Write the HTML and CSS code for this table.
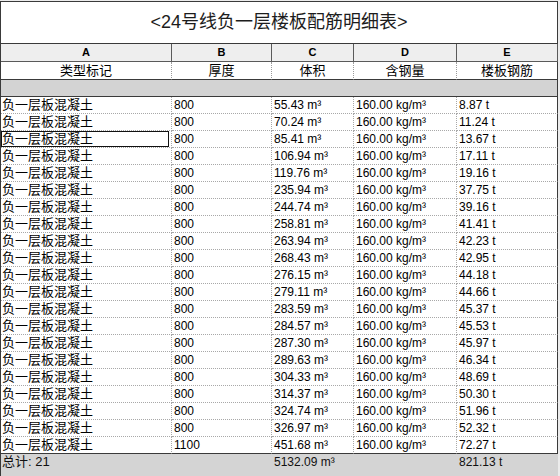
FILE: index.html
```html
<!DOCTYPE html>
<html lang="zh-CN">
<head>
<meta charset="utf-8">
<title>24号线负一层楼板配筋明细表</title>
<link rel="stylesheet" href="styles.css">
</head>
<body>
<div class="sheet">
  <div class="row title-row"><div class="title">&lt;24号线负一层楼板配筋明细表&gt;</div></div>
  <div class="row letters"><div class="c">A</div><div class="c">B</div><div class="c">C</div><div class="c">D</div><div class="c">E</div></div>
  <div class="row names"><div class="c">类型标记</div><div class="c">厚度</div><div class="c">体积</div><div class="c">含钢量</div><div class="c">楼板钢筋</div></div>
  <div class="row band"><div class="c"></div></div>
  <div class="data">
    <div class="row item"><div class="c cj">负一层板混凝土</div><div class="c">800</div><div class="c">55.43 m³</div><div class="c">160.00 kg/m³</div><div class="c">8.87 t</div></div>
    <div class="row item"><div class="c cj">负一层板混凝土</div><div class="c">800</div><div class="c">70.24 m³</div><div class="c">160.00 kg/m³</div><div class="c">11.24 t</div></div>
    <div class="row item"><div class="c cj selected">负一层板混凝土</div><div class="c">800</div><div class="c">85.41 m³</div><div class="c">160.00 kg/m³</div><div class="c">13.67 t</div></div>
    <div class="row item"><div class="c cj">负一层板混凝土</div><div class="c">800</div><div class="c">106.94 m³</div><div class="c">160.00 kg/m³</div><div class="c">17.11 t</div></div>
    <div class="row item"><div class="c cj">负一层板混凝土</div><div class="c">800</div><div class="c">119.76 m³</div><div class="c">160.00 kg/m³</div><div class="c">19.16 t</div></div>
    <div class="row item"><div class="c cj">负一层板混凝土</div><div class="c">800</div><div class="c">235.94 m³</div><div class="c">160.00 kg/m³</div><div class="c">37.75 t</div></div>
    <div class="row item"><div class="c cj">负一层板混凝土</div><div class="c">800</div><div class="c">244.74 m³</div><div class="c">160.00 kg/m³</div><div class="c">39.16 t</div></div>
    <div class="row item"><div class="c cj">负一层板混凝土</div><div class="c">800</div><div class="c">258.81 m³</div><div class="c">160.00 kg/m³</div><div class="c">41.41 t</div></div>
    <div class="row item"><div class="c cj">负一层板混凝土</div><div class="c">800</div><div class="c">263.94 m³</div><div class="c">160.00 kg/m³</div><div class="c">42.23 t</div></div>
    <div class="row item"><div class="c cj">负一层板混凝土</div><div class="c">800</div><div class="c">268.43 m³</div><div class="c">160.00 kg/m³</div><div class="c">42.95 t</div></div>
    <div class="row item"><div class="c cj">负一层板混凝土</div><div class="c">800</div><div class="c">276.15 m³</div><div class="c">160.00 kg/m³</div><div class="c">44.18 t</div></div>
    <div class="row item"><div class="c cj">负一层板混凝土</div><div class="c">800</div><div class="c">279.11 m³</div><div class="c">160.00 kg/m³</div><div class="c">44.66 t</div></div>
    <div class="row item"><div class="c cj">负一层板混凝土</div><div class="c">800</div><div class="c">283.59 m³</div><div class="c">160.00 kg/m³</div><div class="c">45.37 t</div></div>
    <div class="row item"><div class="c cj">负一层板混凝土</div><div class="c">800</div><div class="c">284.57 m³</div><div class="c">160.00 kg/m³</div><div class="c">45.53 t</div></div>
    <div class="row item"><div class="c cj">负一层板混凝土</div><div class="c">800</div><div class="c">287.30 m³</div><div class="c">160.00 kg/m³</div><div class="c">45.97 t</div></div>
    <div class="row item"><div class="c cj">负一层板混凝土</div><div class="c">800</div><div class="c">289.63 m³</div><div class="c">160.00 kg/m³</div><div class="c">46.34 t</div></div>
    <div class="row item"><div class="c cj">负一层板混凝土</div><div class="c">800</div><div class="c">304.33 m³</div><div class="c">160.00 kg/m³</div><div class="c">48.69 t</div></div>
    <div class="row item"><div class="c cj">负一层板混凝土</div><div class="c">800</div><div class="c">314.37 m³</div><div class="c">160.00 kg/m³</div><div class="c">50.30 t</div></div>
    <div class="row item"><div class="c cj">负一层板混凝土</div><div class="c">800</div><div class="c">324.74 m³</div><div class="c">160.00 kg/m³</div><div class="c">51.96 t</div></div>
    <div class="row item"><div class="c cj">负一层板混凝土</div><div class="c">800</div><div class="c">326.97 m³</div><div class="c">160.00 kg/m³</div><div class="c">52.32 t</div></div>
    <div class="row item"><div class="c cj">负一层板混凝土</div><div class="c">1100</div><div class="c">451.68 m³</div><div class="c">160.00 kg/m³</div><div class="c">72.27 t</div></div>
  </div>
  <div class="row total"><div class="c cj">总计: 21</div><div class="c"></div><div class="c">5132.09 m³</div><div class="c"></div><div class="c">821.13 t</div></div>
</div>
</body>
</html>
```
FILE: styles.css
```css
* { box-sizing: border-box; }
html, body { margin: 0; padding: 0; }
body {
  background: #ececec;
  font-family: "Liberation Sans", "Noto Sans CJK SC", sans-serif;
  font-size: 12px;
  color: #000;
}
.sheet {
  width: 558px;
  margin-top: 1px;
  border-left: 1px solid #3a3a3a;
  border-top: 1px solid #3a3a3a;
  background: #fff;
}
.row {
  display: grid;
  grid-template-columns: 171px 100px 82px 103px 101px;
}
.c {
  white-space: nowrap;
  overflow: hidden;
}
.title-row { grid-template-columns: 1fr; }
.title {
  height: 42px;
  line-height: 41px;
  text-align: center;
  font-size: 18px;
  color: #1c1c1c;
  border-right: 1px solid #3a3a3a;
  border-bottom: 1px solid #3a3a3a;
}
.letters .c {
  height: 18px;
  line-height: 17px;
  background: #eeeeee;
  text-align: center;
  font-weight: bold;
  font-size: 11px;
  border-right: 1px solid #5a5a5a;
  border-bottom: 1px solid #5a5a5a;
}
.names .c {
  height: 18px;
  line-height: 17px;
  text-align: center;
  font-size: 13px;
  border-right: 1px dotted #9a9a9a;
  border-bottom: 1px solid #3a3a3a;
}
.names .c:last-child { border-right: 1px solid #3a3a3a; }
.band { grid-template-columns: 1fr; }
.band .c {
  height: 17px;
  background: #d3d3d3;
  border-right: 1px solid #3a3a3a;
  border-bottom: 1px solid #3a3a3a;
}
.item .c {
  height: 17px;
  line-height: 16px;
  padding-left: 2px;
  border-right: 1px dotted #a8a8a8;
  border-bottom: 1px dotted #a8a8a8;
}
.item .c:last-child { border-right: 1px solid #3a3a3a; }
.item:last-child .c { border-bottom: 1px solid #3a3a3a; }
.item .cj {
  font-size: 13px;
  padding-left: 1px;
}
.selected { position: relative; }
.selected::after {
  content: "";
  position: absolute;
  left: 0;
  top: 0;
  right: 2px;
  bottom: 0;
  border: 1px solid #111;
}
.total { background: #d4d4d4; }
.total .c {
  height: 24px;
  line-height: 16px;
  padding-left: 2px;
  color: #111;
}
.total .cj { font-size: 13px; padding-left: 1px; }
```
